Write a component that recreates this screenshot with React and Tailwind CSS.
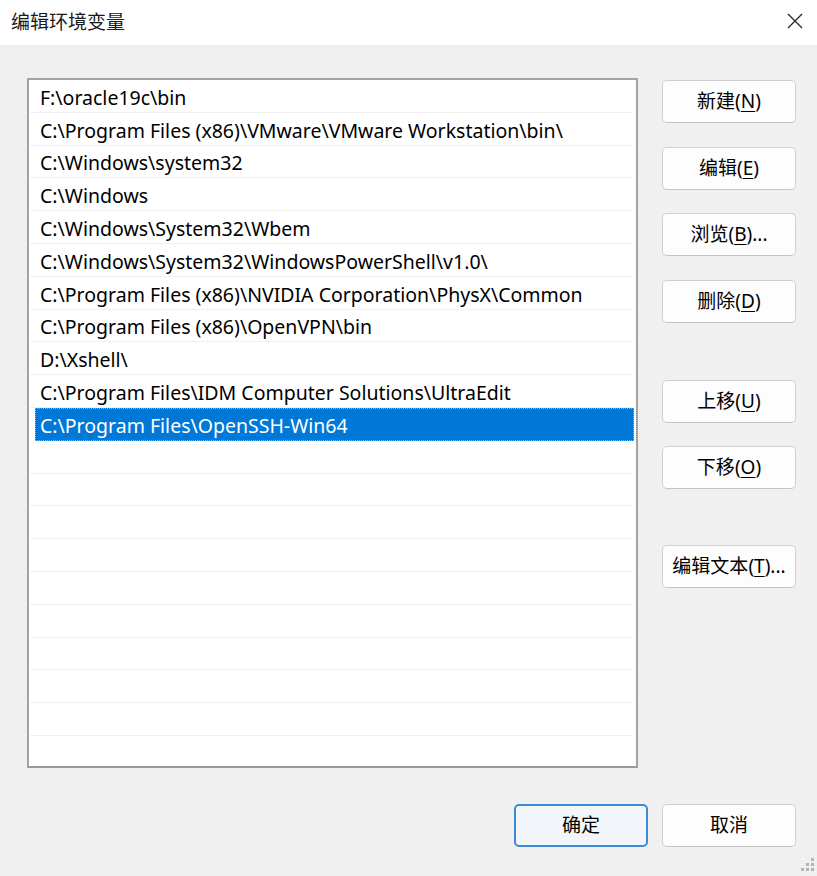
import React from "react"

const paths = [
  "F:\\oracle19c\\bin",
  "C:\\Program Files (x86)\\VMware\\VMware Workstation\\bin\\",
  "C:\\Windows\\system32",
  "C:\\Windows",
  "C:\\Windows\\System32\\Wbem",
  "C:\\Windows\\System32\\WindowsPowerShell\\v1.0\\",
  "C:\\Program Files (x86)\\NVIDIA Corporation\\PhysX\\Common",
  "C:\\Program Files (x86)\\OpenVPN\\bin",
  "D:\\Xshell\\",
  "C:\\Program Files\\IDM Computer Solutions\\UltraEdit",
  "C:\\Program Files\\OpenSSH-Win64",
]

const TOTAL_ROWS = 21
const SELECTED = 10

function Btn({ label, mn, tail = "", className = "" }) {
  return (
    <button
      className={
        "flex h-[43px] w-[134px] items-center justify-center rounded-[5px] border border-[#d0d0d0] border-b-[#c4c4c4] bg-[#fdfdfd] text-[19px] text-black " +
        className
      }
    >
      {label}(<span className="underline underline-offset-[3px]">{mn}</span>){tail}
    </button>
  )
}

function Grip() {
  const dots = [
    [10, 0],
    [5, 5],
    [10, 5],
    [0, 10],
    [5, 10],
    [10, 10],
  ]
  return (
    <svg width="13" height="13" viewBox="0 0 13 13" className="absolute right-[3px] bottom-[5px]">
      {dots.map(([x, y], i) => (
        <rect key={i} x={x} y={y} width="3" height="3" fill="#b4b4b4" />
      ))}
    </svg>
  )
}

export default function App() {
  return (
    <div
      className="relative flex h-[876px] w-[817px] flex-col overflow-hidden bg-[#f0f0f0]"
      style={{ fontFamily: '"Noto Sans", "Noto Sans CJK SC", sans-serif' }}
    >
      {/* title bar */}
      <div className="flex h-[45px] shrink-0 items-center justify-between bg-white pl-[11px] pr-[14px]">
        <span className="text-[19px] text-[#1a1a1a]">编辑环境变量</span>
        <svg width="16" height="16" viewBox="0 0 16 16" className="mt-[-4px]">
          <path d="M1 1 L15 15 M15 1 L1 15" stroke="#2b2b2b" strokeWidth="1.4" fill="none" />
        </svg>
      </div>

      {/* body */}
      <div className="flex gap-[24px] pt-[33px] pl-[27px]">
        <div className="h-[690px] w-[611px] overflow-hidden border-2 border-[#a3a3a3] border-b-[#9a9a9a] bg-white px-px">
          {Array.from({ length: TOTAL_ROWS }).map((_, i) =>
            i === SELECTED ? (
              <div
                key={i}
                className="mr-[1px] ml-[5px] flex h-[32.8px] items-center border border-dotted border-[#e0a060] bg-[#0078d7] pt-[2px] pl-[4px] text-[19.5px] whitespace-nowrap text-white"
              >
                {paths[i]}
              </div>
            ) : (
              <div
                key={i}
                className="mr-[2px] flex h-[32.8px] items-center border-b border-[#f0f0f0] pt-[3px] pl-[10px] text-[19.5px] whitespace-nowrap text-black"
              >
                {paths[i] || ""}
              </div>
            )
          )}
        </div>

        <div className="flex flex-col pt-[2px]">
          <Btn label="新建" mn="N" />
          <Btn label="编辑" mn="E" className="mt-[24px]" />
          <Btn label="浏览" mn="B" tail="..." className="mt-[23px]" />
          <Btn label="删除" mn="D" className="mt-[24px]" />
          <Btn label="上移" mn="U" className="mt-[57px]" />
          <Btn label="下移" mn="O" className="mt-[23px]" />
          <Btn label="编辑文本" mn="T" tail="..." className="mt-[56px]" />
        </div>
      </div>

      {/* footer */}
      <div className="mt-[36px] flex justify-end gap-[14px] pr-[21px]">
        <button className="flex h-[43px] w-[134px] items-center justify-center rounded-[5px] border-2 border-[#3a8ad8] bg-[#f2f5f9] text-[19px] text-black">
          确定
        </button>
        <button className="flex h-[43px] w-[134px] items-center justify-center rounded-[5px] border border-[#d0d0d0] border-b-[#c4c4c4] bg-[#fdfdfd] text-[19px] text-black">
          取消
        </button>
      </div>

      <Grip />
    </div>
  )
}
